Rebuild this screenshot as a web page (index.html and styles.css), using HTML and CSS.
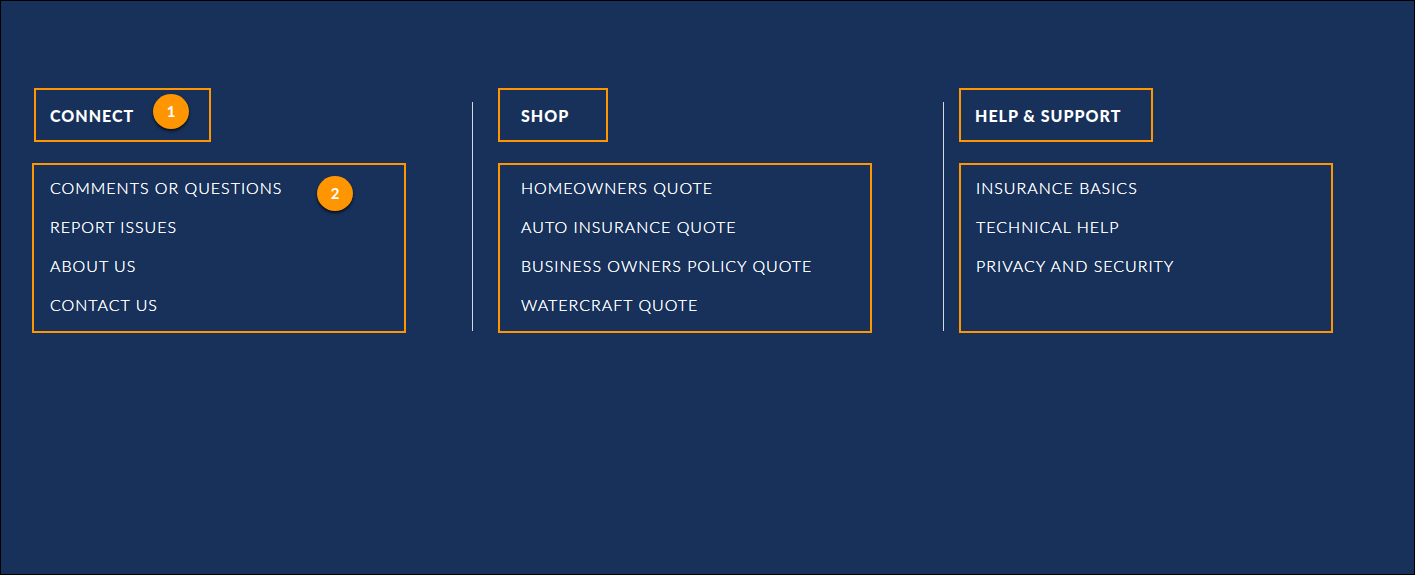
FILE: index.html
```html
<!DOCTYPE html>
<html lang="en">
<head>
    <meta charset="UTF-8">
    <meta name="viewport" content="width=device-width, initial-scale=1.0">
    <title>Footer Links</title>
    <link rel="stylesheet" href="styles.css">
</head>
<body>
    <footer class="footer">
        <nav class="column connect" aria-labelledby="connect-title">
            <div class="heading">
                <h2 id="connect-title">CONNECT</h2>
                <span class="marker">1</span>
            </div>
            <ul class="links">
                <li><a href="#">COMMENTS OR QUESTIONS</a></li>
                <li><a href="#">REPORT ISSUES</a></li>
                <li><a href="#">ABOUT US</a></li>
                <li><a href="#">CONTACT US</a></li>
                <li class="marker">2</li>
            </ul>
        </nav>

        <nav class="column shop" aria-labelledby="shop-title">
            <div class="heading">
                <h2 id="shop-title">SHOP</h2>
            </div>
            <ul class="links">
                <li><a href="#">HOMEOWNERS QUOTE</a></li>
                <li><a href="#">AUTO INSURANCE QUOTE</a></li>
                <li><a href="#">BUSINESS OWNERS POLICY QUOTE</a></li>
                <li><a href="#">WATERCRAFT QUOTE</a></li>
            </ul>
        </nav>

        <nav class="column support" aria-labelledby="support-title">
            <div class="heading">
                <h2 id="support-title">HELP &amp; SUPPORT</h2>
            </div>
            <ul class="links">
                <li><a href="#">INSURANCE BASICS</a></li>
                <li><a href="#">TECHNICAL HELP</a></li>
                <li><a href="#">PRIVACY AND SECURITY</a></li>
            </ul>
        </nav>
    </footer>
</body>
</html>
```
FILE: styles.css
```css
* {
    box-sizing: border-box;
}

body {
    margin: 0;
    min-height: 100vh;
    background: #17315b;
    border: 1px solid #000;
    color: #fff;
    font-family: Lato, sans-serif;
    font-size: 16px;
    letter-spacing: 1px;
}

.footer {
    display: grid;
    grid-template-columns: 1fr 1fr 1fr;
    padding: 87px 0 0 0;
}

.column {
    position: relative;
    display: flex;
    flex-direction: column;
    align-items: flex-start;
    gap: 21px;
    padding-left: 31px;
}

.shop {
    padding-left: 26px;
}

.support {
    padding-left: 16px;
}

/* thin divider on the left of a column */
.shop::before,
.support::before {
    content: "";
    position: absolute;
    left: 0;
    top: 14px;
    bottom: 2px;
    width: 1px;
    background: #d5dae2;
}

.heading {
    position: relative;
    height: 54px;
    padding: 0 14px;
    border: 2px solid #ff9500;
}

.connect .heading {
    width: 177px;
    margin-left: 2px;
}

.shop .heading {
    width: 110px;
    padding-left: 21px;
}

.support .heading {
    width: 194px;
}

h2 {
    margin: 0;
    font-size: 16px;
    font-weight: 900;
    line-height: 52px;
}

.links {
    position: relative;
    width: 374px;
    min-height: 170px;
    margin: 0;
    padding: 3px 16px;
    border: 2px solid #ff9500;
    list-style: none;
    font-weight: 300;
    line-height: 39px;
}

.shop .links {
    padding-left: 21px;
}

.support .links {
    padding-left: 15px;
}

/* the shadow firms up the light weight on the dark background */
.links a {
    color: inherit;
    text-decoration: none;
    text-shadow: 0 0 0 #fff;
}

/* numbered callouts */
.marker {
    position: absolute;
    top: 4px;
    right: 20px;
    width: 36px;
    height: 35px;
    border-radius: 50%;
    background: #ff9500;
    box-shadow: 0 2px 3px rgba(0, 0, 0, 0.7);
    font-size: 15px;
    font-weight: bold;
    line-height: 35px;
    letter-spacing: 0;
    text-align: center;
}

.links .marker {
    top: 11px;
    right: 51px;
}
```
